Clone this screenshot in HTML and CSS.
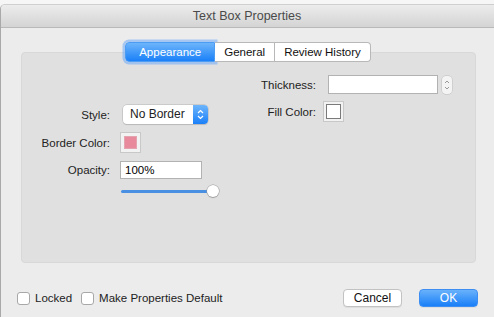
FILE: index.html
```html
<!DOCTYPE html>
<html lang="en">
<head>
  <meta charset="UTF-8">
  <title>Text Box Properties</title>
  <link rel="stylesheet" href="styles.css">
</head>
<body>
  <div class="window">
    <div class="titlebar">Text Box Properties</div>
    <div class="content">
      <div class="tabs">
        <span class="tab active">Appearance</span>
        <span class="tab">General</span>
        <span class="tab last">Review History</span>
      </div>
      <div class="group">
        <div class="col-left">
          <label class="lbl">Style:</label>
          <div class="select">
            <span class="select-text">No Border</span>
            <span class="select-arrows">
              <svg width="7" height="11" viewBox="0 0 7 11"><path d="M1 4 L3.5 1.5 L6 4 M1 7 L3.5 9.5 L6 7" fill="none" stroke="#fff" stroke-width="1.2"/></svg>
            </span>
          </div>
          <label class="lbl">Border Color:</label>
          <div class="well"><span class="swatch pink"></span></div>
          <label class="lbl">Opacity:</label>
          <input class="field opacity" type="text" value="100%">
          <span></span>
          <div class="slider"><span class="track"></span><span class="thumb"></span></div>
        </div>
        <div class="col-right">
          <label class="lbl">Thickness:</label>
          <div class="thick-row">
            <input class="field thick" type="text" value="">
            <span class="stepper">
              <svg width="10" height="18" viewBox="0 0 10 18"><path d="M3 7 L5 5 L7 7 M3 11 L5 13 L7 11" fill="none" stroke="#9a9a9a" stroke-width="1"/></svg>
            </span>
          </div>
          <label class="lbl">Fill Color:</label>
          <div class="well"><span class="swatch empty"></span></div>
        </div>
      </div>
      <div class="footer">
        <label class="check"><span class="box"></span>Locked</label>
        <label class="check"><span class="box"></span>Make Properties Default</label>
        <span class="spacer"></span>
        <button class="btn">Cancel</button>
        <button class="btn primary">OK</button>
      </div>
    </div>
  </div>
</body>
</html>
```

FILE: styles.css
```css
body {
    margin: 0;
    background: #f6f6f6;
    font-family: "Liberation Sans", Arial, sans-serif;
    font-size: 11.5px;
    color: #222;
    overflow: hidden;
}
.window {
    margin-top: 4px;
    width: 494px;
    height: 313px;
    border-left: 1px solid #a9a9a9;
    border-top: 1px solid #cfcfcf;
    border-radius: 5px 0 0 0;
    box-sizing: border-box;
    overflow: hidden;
    background: #ececec;
}
.titlebar {
    height: 22px;
    line-height: 22px;
    text-align: center;
    font-size: 12.5px;
    color: #4a4a4a;
    background: linear-gradient(#ececec, #d4d4d4);
    border-bottom: 1px solid #b9b9b9;
    margin-left: -1px;
}
.content {
    padding: 14px 0 0 20px;
}
.tabs {
    display: flex;
    justify-content: center;
    width: 454px;
    position: relative;
    z-index: 1;
    height: 20px;
}
.tab {
    display: inline-block;
    height: 18px;
    line-height: 18px;
    padding: 0 9px;
    background: #fff;
    border: 1px solid #b8b8b8;
    border-left: none;
    font-size: 11.5px;
    color: #111;
}
.tab.active {
    background: linear-gradient(#6db5fb, #1a80f8);
    color: #fff;
    border: 1px solid #4d9cf4;
    border-radius: 4px 0 0 4px;
    padding: 0 13px;
    box-shadow: 0 0 0 2.5px rgba(110, 170, 245, 0.55);
}
.tab.last {
    border-radius: 0 4px 4px 0;
}
.group {
    margin-top: -10px;
    width: 455px;
    height: 211px;
    background: #e0e0e0;
    border: 1px solid #d8d8d8;
    border-radius: 4px;
    box-sizing: border-box;
    display: flex;
}
.col-left {
    display: grid;
    grid-template-columns: 88px auto;
    column-gap: 10px;
    row-gap: 8px;
    align-items: center;
    align-content: start;
    padding-top: 52px;
    width: 228px;
}
.lbl {
    text-align: right;
    color: #222;
}
.select {
    display: flex;
    width: 85px;
    height: 19px;
    margin-left: 3px;
    border-radius: 4px;
    background: #fff;
    box-shadow: 0 0 0 0.5px #b4b4b4, 0 1px 1px rgba(0, 0, 0, 0.15);
    overflow: hidden;
}
.select-text {
    flex: 1;
    line-height: 19px;
    padding-left: 7px;
    font-size: 12px;
}
.select-arrows {
    width: 15px;
    background: linear-gradient(#6db5fb, #1a80f8);
    display: flex;
    align-items: center;
    justify-content: center;
}
.well {
    width: 19px;
    height: 19px;
    border: 1px solid #c8c8c8;
    background: #f2f2f2;
    display: flex;
    align-items: center;
    justify-content: center;
}
.swatch {
    width: 11px;
    height: 11px;
}
.swatch.pink {
    background: #e88a9c;
    border: 1px solid #e3a4b0;
}
.swatch.empty {
    width: 13px;
    height: 13px;
    background: #fff;
    border: 1px solid #7a7a7a;
}
.field {
    box-sizing: border-box;
    border: 1px solid #b2b2b2;
    background: #fff;
    font-family: inherit;
    font-size: 11.5px;
    padding: 0 4px;
    margin: 0;
    outline: none;
}
.opacity {
    width: 82px;
    height: 18px;
}
.slider {
    position: relative;
    width: 100px;
    height: 14px;
    margin-top: -3px;
}
.track {
    position: absolute;
    left: 1px;
    top: 6px;
    width: 90px;
    height: 3px;
    border-radius: 2px;
    background: #4a90e2;
}
.thumb {
    position: absolute;
    left: 87px;
    top: 1px;
    width: 12px;
    height: 12px;
    border-radius: 50%;
    background: #fff;
    box-shadow: 0 0 0 0.5px #9b9b9b, 0 1px 1px rgba(0, 0, 0, 0.25);
}
.col-right {
    display: grid;
    grid-template-columns: 66px auto;
    column-gap: 7px;
    row-gap: 7px;
    align-items: center;
    align-content: start;
    padding-top: 22px;
}
.thick-row {
    display: flex;
    align-items: center;
    gap: 4px;
    margin-left: 5px;
}
.thick {
    width: 110px;
    height: 19px;
}
.stepper {
    display: flex;
    width: 10px;
    height: 18px;
    background: #f4f4f4;
    border-radius: 4px;
    box-shadow: 0 0 0 0.5px #bdbdbd;
}
.footer {
    display: flex;
    align-items: center;
    margin-top: 26px;
    margin-left: -4px;
    width: 461px;
}
.check {
    display: flex;
    align-items: center;
    gap: 5px;
    margin-right: 9px;
    font-size: 11.5px;
}
.box {
    width: 11px;
    height: 11px;
    background: #fff;
    border: 1px solid #a8a8a8;
    border-radius: 3px;
}
.spacer {
    flex: 1;
}
.btn {
    width: 59px;
    height: 18px;
    padding: 0;
    border-radius: 4px;
    border: 1px solid #c2c2c2;
    background: #fff;
    font-family: inherit;
    font-size: 12px;
    color: #111;
    box-shadow: 0 1px 0 rgba(0, 0, 0, 0.06);
    margin-left: 17px;
}
.btn.primary {
    border-color: #3d8ef3;
    background: linear-gradient(#69b2fb, #1a7ff8);
    color: #fff;
}
```
